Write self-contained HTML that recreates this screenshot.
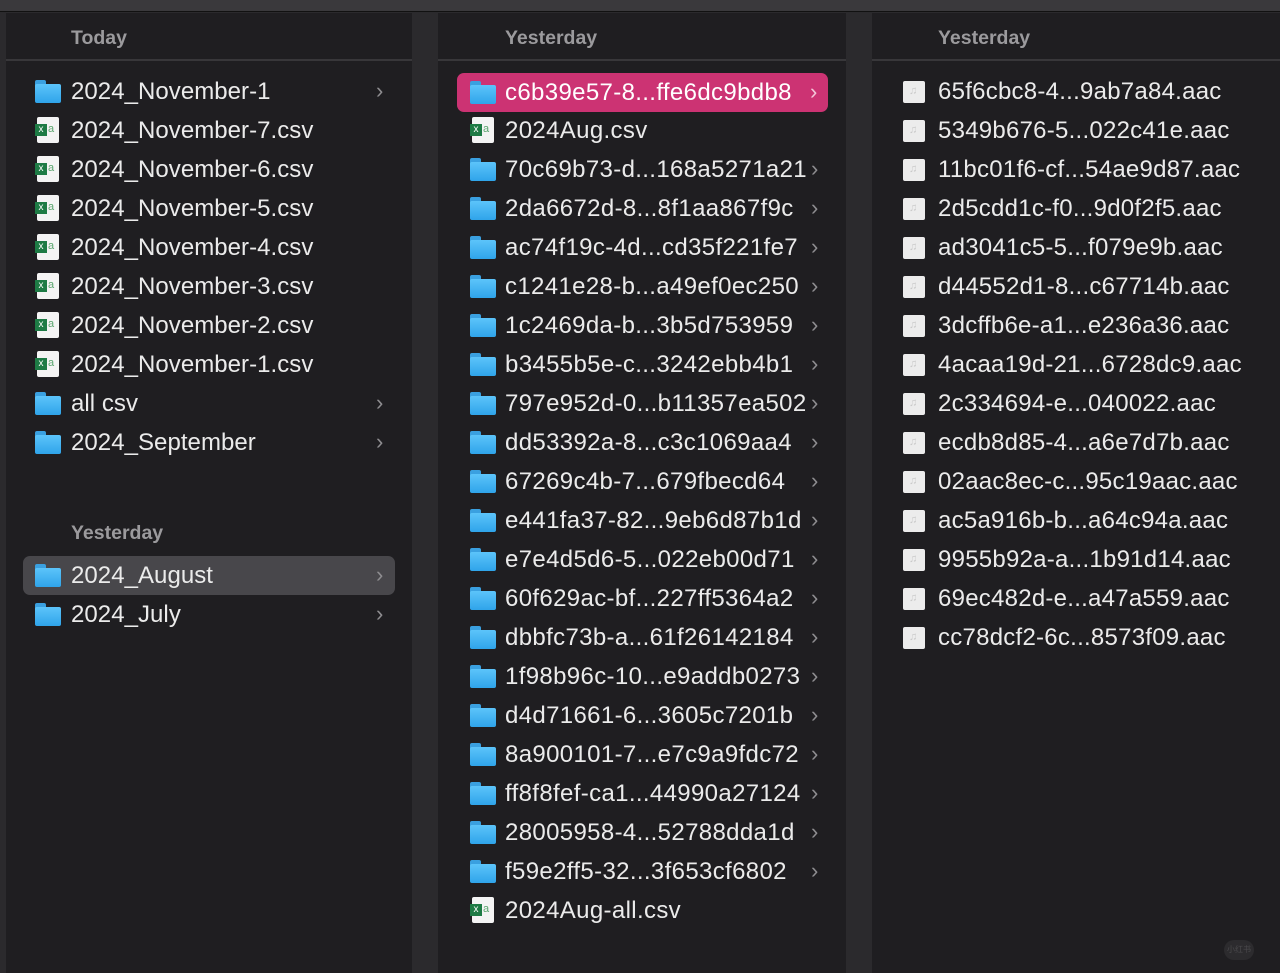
<!DOCTYPE html>
<html><head><meta charset="utf-8"><style>
*{margin:0;padding:0;box-sizing:border-box}
body{width:1280px;height:972px;background:#2b2a2d;position:relative;overflow:hidden;font-family:"Liberation Sans",sans-serif;color:#e6e6e6}
.top{position:absolute;left:0;top:0;width:1280px;height:12px;background:#3a393c;border-bottom:1px solid #111}
.col{position:absolute;top:13px;height:960px;background:#1f1e21}
.hdr{position:absolute;left:0;right:0;top:0;height:48px;border-bottom:2px solid #38373a}
.hdr span{position:absolute;top:14px;font-size:19.5px;font-weight:bold;color:#9b9a9d}
.sub{position:absolute;font-size:19.5px;font-weight:bold;color:#9b9a9d}
.r{position:absolute;height:39px;line-height:39px;font-size:24px;letter-spacing:0.25px;white-space:nowrap;color:#ebebeb}
.c1 .r{letter-spacing:0.05px}
.c2 .r{letter-spacing:0.35px}
.c2 .r .ch{letter-spacing:0}
.r .t{position:absolute;top:0}
.r .ch{position:absolute;top:-1px;font-size:22px;color:#8e8d90}
.sel{background:#48474b;border-radius:7px}
.pink{background:#cc3373;border-radius:7px}
.ic{position:absolute;top:8px}
.fd{width:26px;height:23px}
.fd::before{content:"";position:absolute;left:0;top:0;width:11px;height:6px;background:#3aa0e0;border-radius:2px 2px 0 0}
.fd::after{content:"";position:absolute;left:0;top:4px;width:26px;height:19px;background:linear-gradient(#5cc4fa,#2fa4ea);border-radius:2px}
.cs{width:22px;height:26px;top:6px;background:#f4f4f4;border-radius:2px}
.cs::before{content:"x";position:absolute;left:-2px;top:7px;width:12px;height:12px;background:#1e7b45;color:#fff;font-size:10px;line-height:11px;text-align:center;letter-spacing:0}
.cs::after{content:"a";position:absolute;left:11px;top:6px;font-size:11px;line-height:12px;color:#5aa56e;letter-spacing:0}
.au{width:22px;height:22px;top:9px;background:#ececec;border-radius:2px}
.au::after{content:"♫";position:absolute;left:6px;top:4px;font-size:11px;line-height:12px;color:#c9c9c9}
</style></head><body>
<div class="top"></div>

<div class="col c1" style="left:6px;width:406px">
<div class="hdr"><span style="left:65px">Today</span></div>
<div class="r" style="left:0;top:59px;width:406px"><div class="ic fd" style="left:29px"></div><span class="t" style="left:65px">2024_November-1</span><span class="ch" style="left:370px">›</span></div>
<div class="r" style="left:0;top:98px;width:406px"><div class="ic cs" style="left:31px"></div><span class="t" style="left:65px">2024_November-7.csv</span></div>
<div class="r" style="left:0;top:137px;width:406px"><div class="ic cs" style="left:31px"></div><span class="t" style="left:65px">2024_November-6.csv</span></div>
<div class="r" style="left:0;top:176px;width:406px"><div class="ic cs" style="left:31px"></div><span class="t" style="left:65px">2024_November-5.csv</span></div>
<div class="r" style="left:0;top:215px;width:406px"><div class="ic cs" style="left:31px"></div><span class="t" style="left:65px">2024_November-4.csv</span></div>
<div class="r" style="left:0;top:254px;width:406px"><div class="ic cs" style="left:31px"></div><span class="t" style="left:65px">2024_November-3.csv</span></div>
<div class="r" style="left:0;top:293px;width:406px"><div class="ic cs" style="left:31px"></div><span class="t" style="left:65px">2024_November-2.csv</span></div>
<div class="r" style="left:0;top:332px;width:406px"><div class="ic cs" style="left:31px"></div><span class="t" style="left:65px">2024_November-1.csv</span></div>
<div class="r" style="left:0;top:371px;width:406px"><div class="ic fd" style="left:29px"></div><span class="t" style="left:65px">all csv</span><span class="ch" style="left:370px">›</span></div>
<div class="r" style="left:0;top:410px;width:406px"><div class="ic fd" style="left:29px"></div><span class="t" style="left:65px">2024_September</span><span class="ch" style="left:370px">›</span></div>
<div class="sub" style="left:65px;top:509px">Yesterday</div>
<div class="r sel" style="left:17px;top:543px;width:372px"><div class="ic fd" style="left:12px"></div><span class="t" style="left:48px">2024_August</span><span class="ch" style="left:353px">›</span></div>
<div class="r" style="left:0;top:582px;width:406px"><div class="ic fd" style="left:29px"></div><span class="t" style="left:65px">2024_July</span><span class="ch" style="left:370px">›</span></div>
</div>

<div class="col c2" style="left:438px;width:408px">
<div class="hdr"><span style="left:67px">Yesterday</span></div>
<div class="r pink" style="left:19px;top:60px;width:371px"><div class="ic fd" style="left:13px"></div><span class="t" style="left:48px;color:#fff">c6b39e57-8...ffe6dc9bdb8</span><span class="ch" style="left:353px;color:#f3c6d8">›</span></div>
<div class="r" style="left:0;top:98px"><div class="ic cs" style="left:34px"></div><span class="t" style="left:67px">2024Aug.csv</span></div>
<div class="r" style="left:0;top:137px;width:408px"><div class="ic fd" style="left:32px"></div><span class="t" style="left:67px">70c69b73-d...168a5271a21</span><span class="ch" style="left:373px">›</span></div>
<div class="r" style="left:0;top:176px;width:408px"><div class="ic fd" style="left:32px"></div><span class="t" style="left:67px">2da6672d-8...8f1aa867f9c</span><span class="ch" style="left:373px">›</span></div>
<div class="r" style="left:0;top:215px;width:408px"><div class="ic fd" style="left:32px"></div><span class="t" style="left:67px">ac74f19c-4d...cd35f221fe7</span><span class="ch" style="left:373px">›</span></div>
<div class="r" style="left:0;top:254px;width:408px"><div class="ic fd" style="left:32px"></div><span class="t" style="left:67px">c1241e28-b...a49ef0ec250</span><span class="ch" style="left:373px">›</span></div>
<div class="r" style="left:0;top:293px;width:408px"><div class="ic fd" style="left:32px"></div><span class="t" style="left:67px">1c2469da-b...3b5d753959</span><span class="ch" style="left:373px">›</span></div>
<div class="r" style="left:0;top:332px;width:408px"><div class="ic fd" style="left:32px"></div><span class="t" style="left:67px">b3455b5e-c...3242ebb4b1</span><span class="ch" style="left:373px">›</span></div>
<div class="r" style="left:0;top:371px;width:408px"><div class="ic fd" style="left:32px"></div><span class="t" style="left:67px">797e952d-0...b11357ea502</span><span class="ch" style="left:373px">›</span></div>
<div class="r" style="left:0;top:410px;width:408px"><div class="ic fd" style="left:32px"></div><span class="t" style="left:67px">dd53392a-8...c3c1069aa4</span><span class="ch" style="left:373px">›</span></div>
<div class="r" style="left:0;top:449px;width:408px"><div class="ic fd" style="left:32px"></div><span class="t" style="left:67px">67269c4b-7...679fbecd64</span><span class="ch" style="left:373px">›</span></div>
<div class="r" style="left:0;top:488px;width:408px"><div class="ic fd" style="left:32px"></div><span class="t" style="left:67px">e441fa37-82...9eb6d87b1d</span><span class="ch" style="left:373px">›</span></div>
<div class="r" style="left:0;top:527px;width:408px"><div class="ic fd" style="left:32px"></div><span class="t" style="left:67px">e7e4d5d6-5...022eb00d71</span><span class="ch" style="left:373px">›</span></div>
<div class="r" style="left:0;top:566px;width:408px"><div class="ic fd" style="left:32px"></div><span class="t" style="left:67px">60f629ac-bf...227ff5364a2</span><span class="ch" style="left:373px">›</span></div>
<div class="r" style="left:0;top:605px;width:408px"><div class="ic fd" style="left:32px"></div><span class="t" style="left:67px">dbbfc73b-a...61f26142184</span><span class="ch" style="left:373px">›</span></div>
<div class="r" style="left:0;top:644px;width:408px"><div class="ic fd" style="left:32px"></div><span class="t" style="left:67px">1f98b96c-10...e9addb0273</span><span class="ch" style="left:373px">›</span></div>
<div class="r" style="left:0;top:683px;width:408px"><div class="ic fd" style="left:32px"></div><span class="t" style="left:67px">d4d71661-6...3605c7201b</span><span class="ch" style="left:373px">›</span></div>
<div class="r" style="left:0;top:722px;width:408px"><div class="ic fd" style="left:32px"></div><span class="t" style="left:67px">8a900101-7...e7c9a9fdc72</span><span class="ch" style="left:373px">›</span></div>
<div class="r" style="left:0;top:761px;width:408px"><div class="ic fd" style="left:32px"></div><span class="t" style="left:67px">ff8f8fef-ca1...44990a27124</span><span class="ch" style="left:373px">›</span></div>
<div class="r" style="left:0;top:800px;width:408px"><div class="ic fd" style="left:32px"></div><span class="t" style="left:67px">28005958-4...52788dda1d</span><span class="ch" style="left:373px">›</span></div>
<div class="r" style="left:0;top:839px;width:408px"><div class="ic fd" style="left:32px"></div><span class="t" style="left:67px">f59e2ff5-32...3f653cf6802</span><span class="ch" style="left:373px">›</span></div>
<div class="r" style="left:0;top:878px"><div class="ic cs" style="left:34px"></div><span class="t" style="left:67px">2024Aug-all.csv</span></div>
</div>

<div class="col" style="left:872px;width:408px">
<div class="hdr"><span style="left:66px">Yesterday</span></div>
<div class="r" style="left:0;top:59px"><div class="ic au" style="left:31px"></div><span class="t" style="left:66px">65f6cbc8-4...9ab7a84.aac</span></div>
<div class="r" style="left:0;top:98px"><div class="ic au" style="left:31px"></div><span class="t" style="left:66px">5349b676-5...022c41e.aac</span></div>
<div class="r" style="left:0;top:137px"><div class="ic au" style="left:31px"></div><span class="t" style="left:66px">11bc01f6-cf...54ae9d87.aac</span></div>
<div class="r" style="left:0;top:176px"><div class="ic au" style="left:31px"></div><span class="t" style="left:66px">2d5cdd1c-f0...9d0f2f5.aac</span></div>
<div class="r" style="left:0;top:215px"><div class="ic au" style="left:31px"></div><span class="t" style="left:66px">ad3041c5-5...f079e9b.aac</span></div>
<div class="r" style="left:0;top:254px"><div class="ic au" style="left:31px"></div><span class="t" style="left:66px">d44552d1-8...c67714b.aac</span></div>
<div class="r" style="left:0;top:293px"><div class="ic au" style="left:31px"></div><span class="t" style="left:66px">3dcffb6e-a1...e236a36.aac</span></div>
<div class="r" style="left:0;top:332px"><div class="ic au" style="left:31px"></div><span class="t" style="left:66px">4acaa19d-21...6728dc9.aac</span></div>
<div class="r" style="left:0;top:371px"><div class="ic au" style="left:31px"></div><span class="t" style="left:66px">2c334694-e...040022.aac</span></div>
<div class="r" style="left:0;top:410px"><div class="ic au" style="left:31px"></div><span class="t" style="left:66px">ecdb8d85-4...a6e7d7b.aac</span></div>
<div class="r" style="left:0;top:449px"><div class="ic au" style="left:31px"></div><span class="t" style="left:66px">02aac8ec-c...95c19aac.aac</span></div>
<div class="r" style="left:0;top:488px"><div class="ic au" style="left:31px"></div><span class="t" style="left:66px">ac5a916b-b...a64c94a.aac</span></div>
<div class="r" style="left:0;top:527px"><div class="ic au" style="left:31px"></div><span class="t" style="left:66px">9955b92a-a...1b91d14.aac</span></div>
<div class="r" style="left:0;top:566px"><div class="ic au" style="left:31px"></div><span class="t" style="left:66px">69ec482d-e...a47a559.aac</span></div>
<div class="r" style="left:0;top:605px"><div class="ic au" style="left:31px"></div><span class="t" style="left:66px">cc78dcf2-6c...8573f09.aac</span></div>
<div style="position:absolute;left:352px;top:927px;width:30px;height:20px;border-radius:10px;background:#2c2b2e;color:#4a494c;font-size:8px;line-height:20px;text-align:center;white-space:nowrap;font-family:'Noto Sans CJK SC',sans-serif">小红书</div>
</div>
</body></html>
